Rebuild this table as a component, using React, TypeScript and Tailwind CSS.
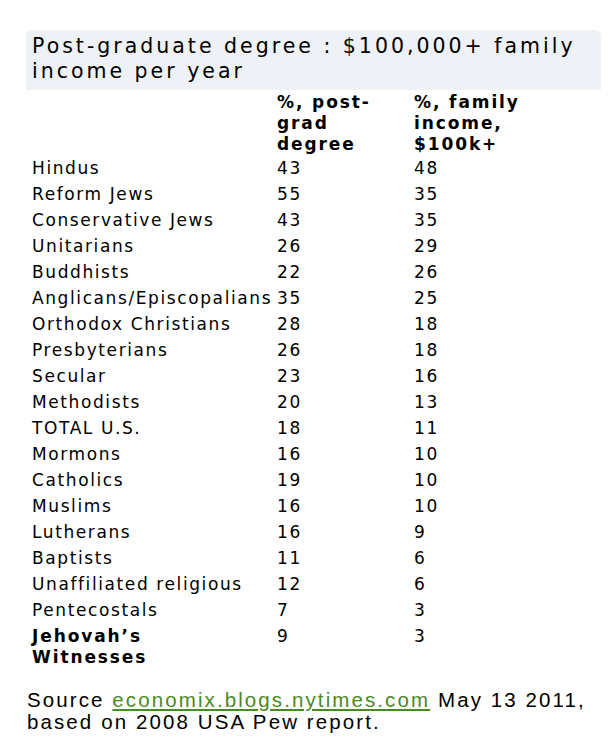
const rows: [string, string, string][] = [
  ["Hindus", "43", "48"],
  ["Reform Jews", "55", "35"],
  ["Conservative Jews", "43", "35"],
  ["Unitarians", "26", "29"],
  ["Buddhists", "22", "26"],
  ["Anglicans/Episcopalians", "35", "25"],
  ["Orthodox Christians", "28", "18"],
  ["Presbyterians", "26", "18"],
  ["Secular", "23", "16"],
  ["Methodists", "20", "13"],
  ["TOTAL U.S.", "18", "11"],
  ["Mormons", "16", "10"],
  ["Catholics", "19", "10"],
  ["Muslims", "16", "10"],
  ["Lutherans", "16", "9"],
  ["Baptists", "11", "6"],
  ["Unaffiliated religious", "12", "6"],
  ["Pentecostals", "7", "3"],
];

export default function App() {
  return (
    <div className="w-[615px] h-[751px] bg-white text-black pt-[30px] font-['DejaVu_Sans',sans-serif]">
      <div className="ml-[26px] w-[575px] bg-[#eef1f5] rounded-t-md px-[6px] pt-[4px] pb-[6px] text-[20.5px] leading-[25px] tracking-[3px]">
        Post-graduate degree : $100,000+ family income per year
      </div>

      <div className="ml-[32px] grid grid-cols-[245px_137px_1fr] text-[17px] tracking-[1.6px]">
        <div />
        <div className="font-bold leading-[21px] pt-[2px] tracking-[1.9px]">
          %, post-
          <br />
          grad
          <br />
          degree
        </div>
        <div className="font-bold leading-[21px] pt-[2px] tracking-[1.9px]">
          %, family
          <br />
          income,
          <br />
          $100k+
        </div>

        {rows.map(([name, a, b]) => (
          <div key={name} className="contents">
            <div className="leading-[26px] whitespace-nowrap">{name}</div>
            <div className="leading-[26px]">{a}</div>
            <div className="leading-[26px]">{b}</div>
          </div>
        ))}

        <div className="font-bold leading-[21px] pt-[3px] tracking-[1.9px]">
          Jehovah&rsquo;s
          <br />
          Witnesses
        </div>
        <div className="leading-[21px] pt-[3px]">9</div>
        <div className="leading-[21px] pt-[3px]">3</div>
      </div>

      <div className="ml-[27px] mt-[21px] font-['Liberation_Sans',Arial,sans-serif] text-[20.5px] leading-[22px] tracking-[2.1px]">
        Source{" "}
        <a href="#" className="text-[#4a8a1e] underline">
          economix.blogs.nytimes.com
        </a>{" "}
        May 13 2011,
        <br />
        based on 2008 USA Pew report.
      </div>
    </div>
  );
}
